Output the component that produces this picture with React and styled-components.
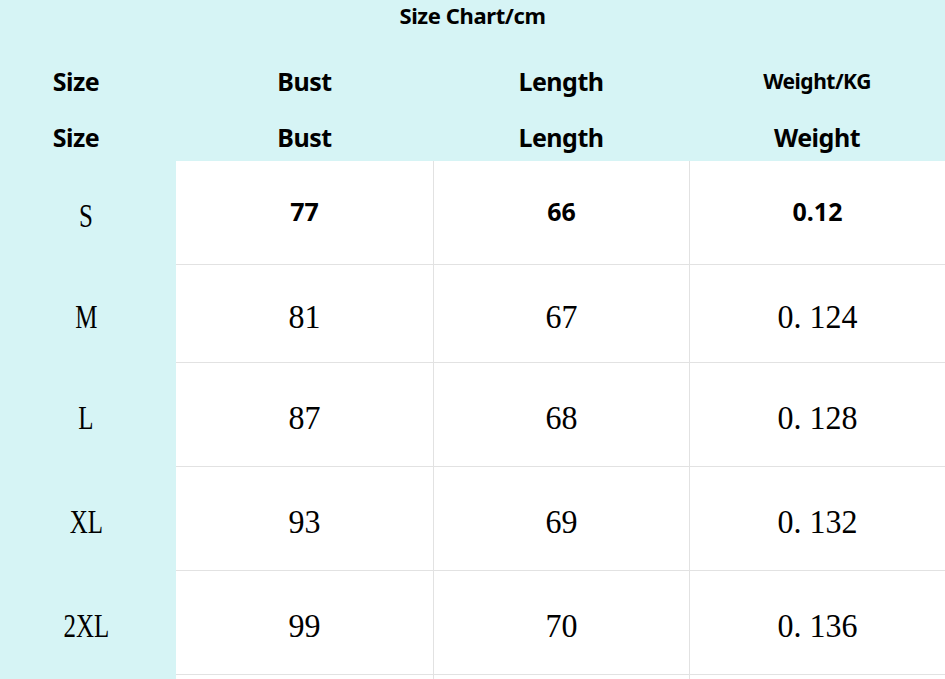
import styled, { createGlobalStyle } from "styled-components";

const GlobalStyle = createGlobalStyle`
  html, body {
    margin: 0;
    padding: 0;
    background: #d6f4f5;
    overflow: hidden;
  }
`;

const header = [
  { first: "Size", second: "Size" },
  { first: "Bust", second: "Bust" },
  { first: "Length", second: "Length" },
  { first: "Weight/KG", second: "Weight", small: true },
];

const rows = [
  { size: "S", bust: "77", length: "66", weight: "0.12", bold: true, height: 103 },
  { size: "M", bust: "81", length: "67", weight: "0. 124", height: 98 },
  { size: "L", bust: "87", length: "68", weight: "0. 128", height: 104 },
  { size: "XL", bust: "93", length: "69", weight: "0. 132", height: 104 },
  { size: "2XL", bust: "99", length: "70", weight: "0. 136", height: 104 },
  { size: "", bust: "", length: "", weight: "", height: 104 },
];

function App() {
  return (
    <>
      <GlobalStyle />
      <Page>
        <Title>Size Chart/cm</Title>
        <HeadRow height={56}>
          {header.map((h, i) => (
            <HeadCell key={h.first} offset={i === 0 ? -12 : 0} small={h.small}>
              {h.first}
            </HeadCell>
          ))}
        </HeadRow>
        <HeadRow height={51} shift={5}>
          {header.map((h, i) => (
            <HeadCell key={h.second} offset={i === 0 ? -12 : 0}>
              {h.second}
            </HeadCell>
          ))}
        </HeadRow>
        {rows.map((r, i) => (
          <Row key={i} height={r.height}>
            <SizeCell>
              <Narrow>{r.size}</Narrow>
            </SizeCell>
            <ValueCell first top={i > 0}>
              <Value bold={r.bold}>{r.bust}</Value>
            </ValueCell>
            <ValueCell top={i > 0}>
              <Value bold={r.bold}>{r.length}</Value>
            </ValueCell>
            <ValueCell top={i > 0}>
              <Value bold={r.bold}>{r.weight}</Value>
            </ValueCell>
          </Row>
        ))}
      </Page>
    </>
  );
}

const Page = styled.div`
  width: 945px;
  height: 679px;
  overflow: hidden;
  background: #d6f4f5;
  color: #000;
`;

const Title = styled.div`
  height: 54px;
  line-height: 31px;
  text-align: center;
  font-family: "Noto Sans", sans-serif;
  font-weight: 700;
  font-size: 22px;
  letter-spacing: -0.4px;
  padding-left: 0;
`;

const HeadRow = styled.div`
  display: grid;
  grid-template-columns: 176px 257px 256px 256px;
  height: ${({ height }) => height}px;
  box-sizing: border-box;
  padding-top: ${({ shift }) => shift || 0}px;
`;

const HeadCell = styled.div`
  display: flex;
  align-items: center;
  justify-content: center;
  margin-top: -2px;
  font-family: "Noto Sans", sans-serif;
  font-weight: 700;
  font-size: ${({ small }) => (small ? 21 : 25)}px;
  letter-spacing: -0.5px;
  transform: translateX(${({ offset }) => offset}px);
`;

const Row = styled.div`
  display: grid;
  grid-template-columns: 176px 257px 256px 256px;
  height: ${({ height }) => height}px;
`;

const SizeCell = styled.div`
  display: flex;
  align-items: center;
  justify-content: center;
  padding-right: 4px;
  padding-top: 6px;
  background: #d6f4f5;
`;

const ValueCell = styled.div`
  display: flex;
  align-items: center;
  justify-content: center;
  padding-top: 6px;
  background: #fff;
  border-top: ${({ top }) => (top ? "1px solid #e2e2e2" : "none")};
  border-left: ${({ first }) => (first ? "none" : "1px solid #e2e2e2")};
`;

const Narrow = styled.span`
  display: inline-block;
  font-family: "Liberation Serif", serif;
  font-size: 32px;
  transform: scale(0.78, 1.05);
`;

const Value = styled.span`
  display: inline-block;
  font-family: ${({ bold }) =>
    bold ? '"Noto Sans", sans-serif' : '"Liberation Serif", serif'};
  font-weight: ${({ bold }) => (bold ? 700 : 400)};
  font-size: ${({ bold }) => (bold ? 25 : 32)}px;
  margin-top: ${({ bold }) => (bold ? -9 : 0)}px;
  transform: ${({ bold }) => (bold ? "none" : "scaleY(1.05)")};
`;

export default App;
